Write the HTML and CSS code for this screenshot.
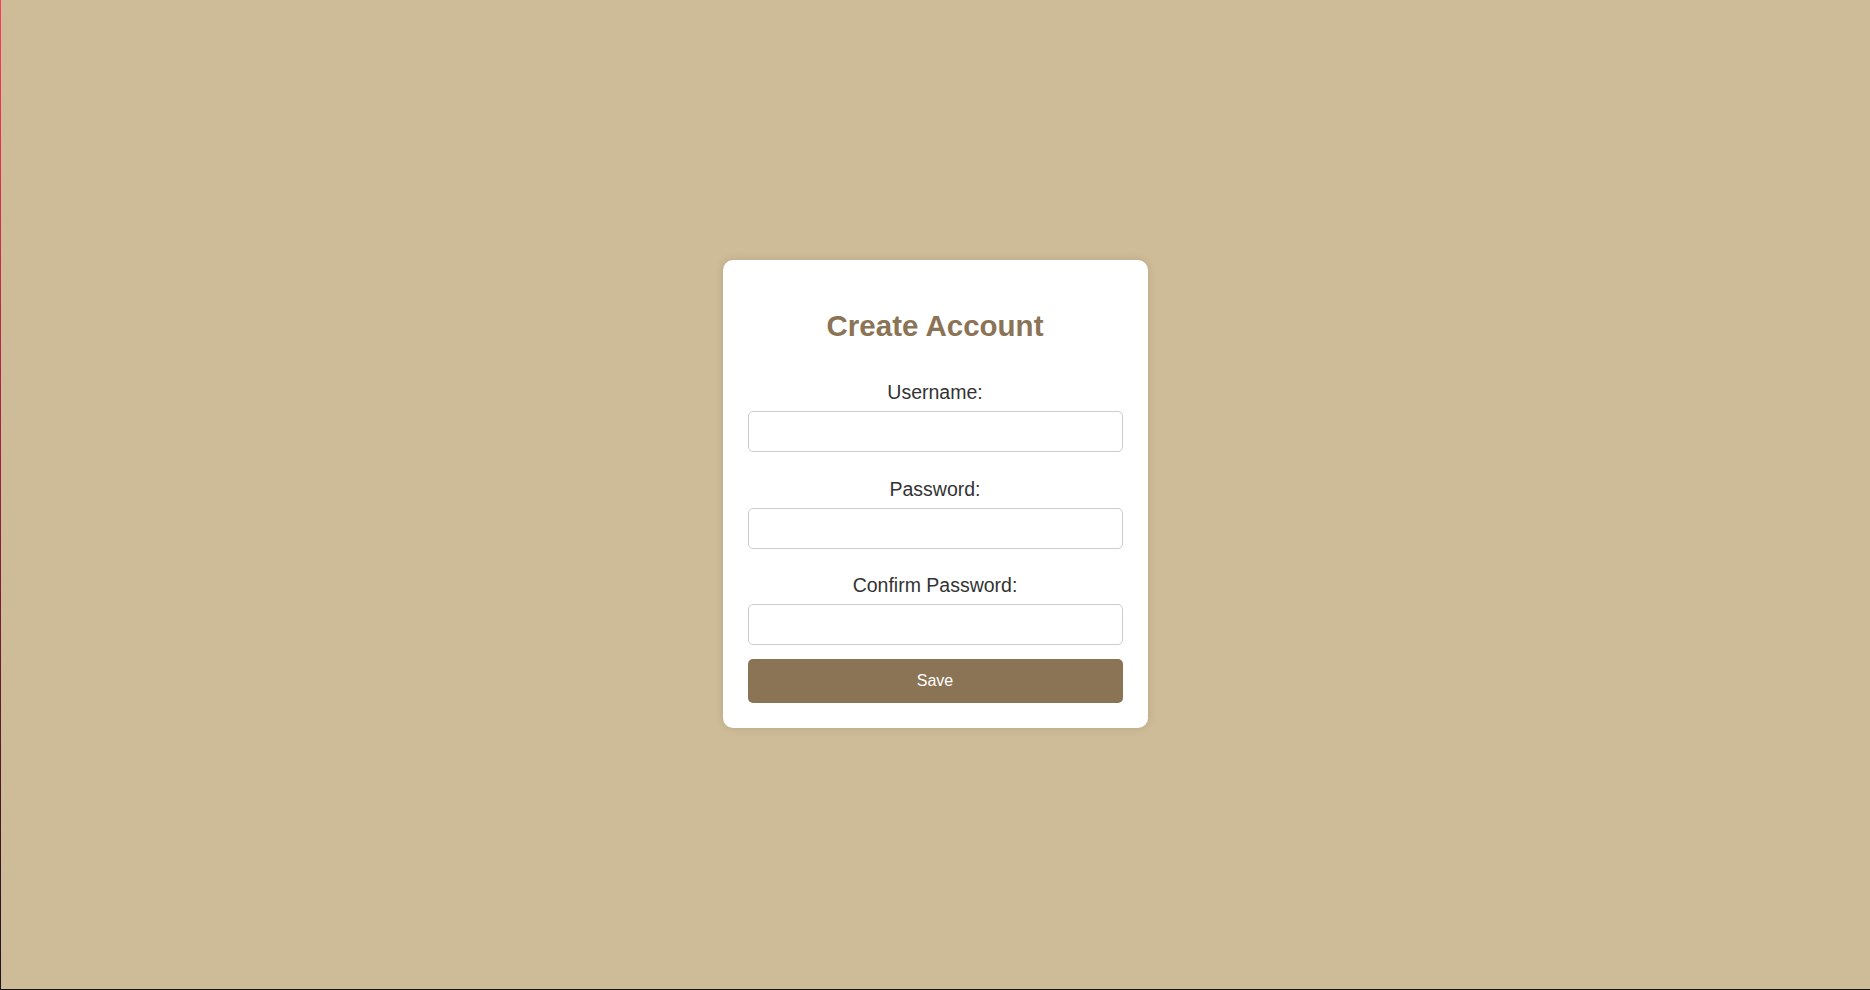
FILE: index.html
```html
<!DOCTYPE html>
<html lang="en">
<head>
<meta charset="utf-8">
<title>Create Account</title>
<link rel="stylesheet" href="styles.css">
</head>
<body>
<div class="frame-edge"></div>
<main class="page">
  <div class="card">
    <h2 class="title">Create Account</h2>
    <form class="form">
      <div class="field">
        <label class="label" for="username">Username:</label>
        <input class="input" id="username" type="text">
      </div>
      <div class="field">
        <label class="label" for="password">Password:</label>
        <input class="input" id="password" type="password">
      </div>
      <div class="field">
        <label class="label" for="confirm">Confirm Password:</label>
        <input class="input" id="confirm" type="password">
      </div>
      <button class="btn" type="button">Save</button>
    </form>
  </div>
</main>
</body>
</html>
```

FILE: styles.css
```css
* {
  box-sizing: border-box;
}

html, body {
  margin: 0;
  padding: 0;
  height: 100%;
}

body {
  font-family: "Liberation Sans", Arial, sans-serif;
  background: #cebb97;
  color: #333;
}

.frame-edge {
  position: fixed;
  inset: 0;
  pointer-events: none;
  border-left: 1px solid transparent;
  border-image: linear-gradient(to bottom, #ff3a5c, #8a1f3d 55%, #1c1420) 1;
  border-bottom: 1px solid #111;
  border-right: 0;
  border-top: 0;
  z-index: 10;
}

.frame-edge::after {
  content: "";
  position: absolute;
  left: -1px;
  right: 0;
  bottom: -1px;
  height: 1px;
  background: #111;
}

.page {
  height: 100%;
  padding-bottom: 2px;
  display: flex;
  align-items: center;
  justify-content: center;
}

.card {
  width: 425px;
  padding: 25px;
  background: #fff;
  border-radius: 10px;
  box-shadow: 0 0 10px rgba(0, 0, 0, 0.1);
  text-align: center;
}

.title {
  margin: 24px 0 38.5px;
  font-size: 29.5px;
  font-weight: bold;
  color: #8b7355;
  line-height: normal;
}

.form {
  display: flex;
  flex-direction: column;
}

.field + .field {
  margin-top: 25.5px;
}

.label {
  display: block;
  font-size: 19.5px;
  color: #333;
  margin-bottom: 7px;
}

.input {
  display: block;
  width: 100%;
  padding: 10px;
  font-family: "Liberation Sans", Arial, sans-serif;
  font-size: 16px;
  line-height: 19px;
  border: 1px solid #ccc;
  border-radius: 5px;
  background: #fff;
}

.btn {
  margin-top: 14px;
  width: 100%;
  padding: 13px 0;
  border: 0;
  border-radius: 5px;
  background: #8b7355;
  color: #fff;
  font-family: "Liberation Sans", Arial, sans-serif;
  font-size: 16px;
  line-height: normal;
  cursor: pointer;
}
```
